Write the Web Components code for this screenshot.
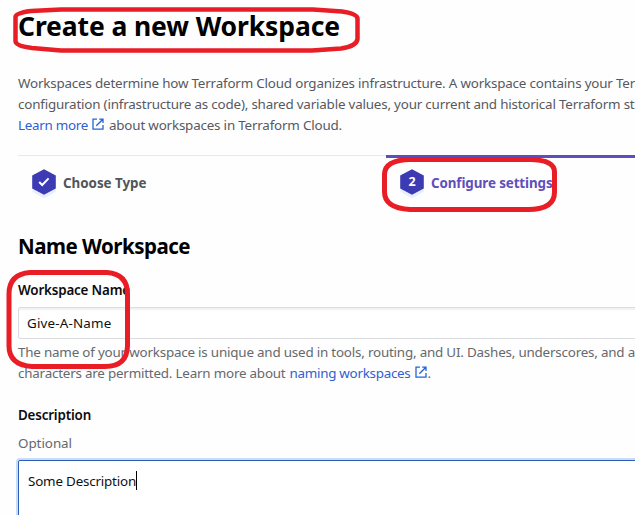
<!DOCTYPE html>
<html lang="en"><head><meta charset="utf-8"><title>Create a new Workspace</title>
<style>
html,body{margin:0;height:515px;overflow:hidden;background:#fefefe}
body{font:13.4px/21px "Noto Sans","Open Sans",sans-serif;color:#56595e}
</style></head><body>
<workspace-page></workspace-page>
<script>
const define=(name,html,setup)=>customElements.define(name,class extends HTMLElement{
  connectedCallback(){
    if(this.shadowRoot)return;
    this.attachShadow({mode:'open'}).innerHTML=html;
    if(setup)setup.call(this);
  }
});

/* A run of text whose tracking is set so that it spans the given width. */
define('text-run','<style>:host{display:inline-block;white-space:nowrap;flex:none}span{display:inline-block}</style><span><slot></slot></span>',function(){
  const s=this.shadowRoot.querySelector('span'),w=+this.getAttribute('w');
  const n=this.textContent.length;
  s.style.letterSpacing=(w-s.getBoundingClientRect().width)/n+'px';
});

define('external-icon',`<style>:host{display:inline-block;width:12px;height:12px;flex:none;color:#2264d6}svg{display:block}</style>
<svg width="12" height="12" viewBox="0 0 12 12" fill="none" stroke="currentColor" stroke-width="1.3"><path d="M5 1.2H1v9.900h10V7M7.200 1.200H11V5M10.900 1.300 4.300 7.800"/></svg>`);

define('step-badge',`<style>:host{display:block;width:24px;height:30px;flex:none}svg{display:block}text{font:700 12.5px "Noto Sans",sans-serif;fill:#fff}</style>
<svg width="24" height="30" viewBox="0 0 24 30"><path d="M12 3.8 23.5 10v13L12 29.2.5 23V10z" fill="#e8effc"/><path d="M12 .2 23.8 6.6v12.8L12 25.8.2 19.4V6.6z" fill="#3d3bb3"/><g></g></svg>`,function(){
  const n=this.getAttribute('n');
  this.shadowRoot.querySelector('g').innerHTML=n?`<text x="12" y="17.4" text-anchor="middle">${n}</text>`:'<path d="M7.200 13l3 3L16.600 9.400" fill="none" stroke="#fff" stroke-width="2"/>';
});

define('step-tab',`<style>
:host{display:flex;box-sizing:border-box;width:368px;height:56px;flex:none;padding:13px 0 0 14px;border-top:1px solid #e8e8ea;color:#525559;font-weight:700}
:host([active]){border-top:3px solid #5c4ebc;padding-top:11px;color:#5f4fbb}
div{padding:4px 0 0 7px}</style><step-badge></step-badge><div><slot></slot></div>`,function(){
  if(this.hasAttribute('n'))this.shadowRoot.querySelector('step-badge').replaceWith(Object.assign(document.createElement('template'),{innerHTML:`<step-badge n="${this.getAttribute('n')}"></step-badge>`}).content);
});

define('text-field',`<style>
:host{display:block;box-sizing:border-box;width:660px;height:32px;padding:5px 0 0 8px;border:1px solid #dcdde1;border-radius:2px;background:#fff;box-shadow:inset 0 2px 2px #f1f1f3;color:#111}
:host([area]){height:90px;padding:10px 0 0 9px;border-color:#2b5fb8;box-shadow:0 0 0 2px #c9dcf8}
div{display:flex}i{display:none;width:1px;height:19px;background:#000}:host([area]) i{display:block}</style>
<div><slot></slot><i></i></div>`);

define('marker-rings',`<style>:host{position:absolute;inset:0;pointer-events:none}svg{display:block}</style>
<svg width="635" height="515" fill="none" stroke="#e91d25" stroke-width="5" stroke-linejoin="round">
<path stroke-width="4.5" d="M61 9.500H313L342 11.500Q358 14 357.500 19V39Q357 46 341 48.500L312 50.500H61L32 48Q15.500 46 15.500 41V17Q15.500 13 31 11Z"/>
<path d="M410 159.500H530Q554.500 160 554.500 172V192Q554.500 209.500 528 209.500H410Q384.500 208 384.500 192V174Q385 160 410 159.500Z"/>
<path d="M30 272.500H107Q127.500 274 127.500 294V346Q127 366.500 105 366.500H32Q9 365 9 346V294Q9 274 30 272.500Z"/></svg>`);

define('workspace-page',`<style>
:host{display:block;position:relative;box-sizing:border-box;width:635px;height:515px;overflow:hidden;padding:6px 0 0 18px}
h1,h2,h3,p{margin:0}
h1{font:700 26.5px/40px "Noto Sans";color:#000;margin-bottom:27px}
h2{font:700 20.5px/28px "Noto Sans";color:#000;margin:21px 0 20px}
h3{font:600 13.4px/21px "Noto Sans";color:#0c0c0e}
p>div,.help>div,.line{display:flex;height:21px}
external-icon{margin:3px 5px 0 4px}
.help external-icon{margin-right:1px}
.link{color:#2f5fd0}
.steps{display:flex;margin-top:19px}
text-field{margin-top:6px}
.help{margin-top:3px;margin-bottom:21px;color:#65686d}
.opt{margin-top:7px;color:#65686d}
.gap{margin-right:4px}
</style>
<h1><text-run w="322">Create a new Workspace</text-run></h1>
<div class="line"><text-run w="617">Workspaces determine how Terraform Cloud organizes infrastructure. A workspace contains your Ter</text-run></div>
<div class="line"><text-run w="616.5">configuration (infrastructure as code), shared variable values, your current and historical Terraform st</text-run></div>
<div class="line"><text-run class="link" w="70">Learn more</text-run><external-icon></external-icon><text-run w="233">about workspaces in Terraform Cloud.</text-run></div>
<section class="steps"><step-tab><text-run w="83.500">Choose Type</text-run></step-tab><step-tab active n="2"><text-run w="121.500">Configure settings</text-run></step-tab></section>
<h2><text-run w="172">Name Workspace</text-run></h2>
<h3><text-run w="112">Workspace Name</text-run></h3>
<text-field><text-run w="84.500">Give-A-Name</text-run></text-field>
<section class="help"><div><text-run w="617">The name of your workspace is unique and used in tools, routing, and UI. Dashes, underscores, and a</text-run></div>
<div><text-run w="267.500" class="gap">characters are permitted. Learn more about</text-run><text-run class="link" w="121">naming workspaces</text-run><external-icon></external-icon><text-run w="3">.</text-run></div></section>
<h3><text-run w="73">Description</text-run></h3>
<div class="opt"><text-run w="54">Optional</text-run></div>
<text-field area><text-run w="108">Some Description</text-run></text-field>
<marker-rings></marker-rings>`);
</script></body></html>
